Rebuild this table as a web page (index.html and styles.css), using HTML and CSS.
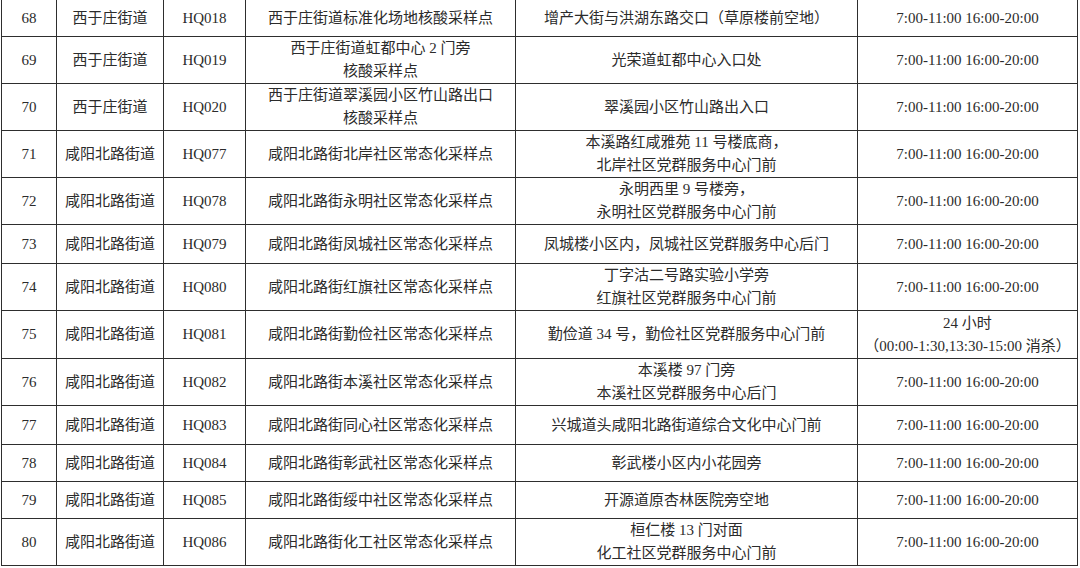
FILE: index.html
```html
<!DOCTYPE html>
<html lang="zh-CN">
<head>
<meta charset="utf-8">
<title>核酸采样点</title>
<link rel="stylesheet" href="styles.css">
</head>
<body>
<table class="sites">
  <colgroup>
    <col class="c-no"><col class="c-street"><col class="c-code"><col class="c-name"><col class="c-addr"><col class="c-time">
  </colgroup>
  <tbody>
    <tr class="h37"><td>68</td><td>西于庄街道</td><td>HQ018</td><td>西于庄街道标准化场地核酸采样点</td><td>增产大街与洪湖东路交口（草原楼前空地）</td><td>7:00-11:00 16:00-20:00</td></tr>
    <tr class="h47"><td>69</td><td>西于庄街道</td><td>HQ019</td><td>西于庄街道虹都中心 2 门旁<br>核酸采样点</td><td>光荣道虹都中心入口处</td><td>7:00-11:00 16:00-20:00</td></tr>
    <tr class="h47"><td>70</td><td>西于庄街道</td><td>HQ020</td><td>西于庄街道翠溪园小区竹山路出口<br>核酸采样点</td><td>翠溪园小区竹山路出入口</td><td>7:00-11:00 16:00-20:00</td></tr>
    <tr class="h47"><td>71</td><td>咸阳北路街道</td><td>HQ077</td><td>咸阳北路街北岸社区常态化采样点</td><td>本溪路红咸雅苑 11 号楼底商，<br>北岸社区党群服务中心门前</td><td>7:00-11:00 16:00-20:00</td></tr>
    <tr class="h47"><td>72</td><td>咸阳北路街道</td><td>HQ078</td><td>咸阳北路街永明社区常态化采样点</td><td>永明西里 9 号楼旁，<br>永明社区党群服务中心门前</td><td>7:00-11:00 16:00-20:00</td></tr>
    <tr class="h39"><td>73</td><td>咸阳北路街道</td><td>HQ079</td><td>咸阳北路街凤城社区常态化采样点</td><td>凤城楼小区内，凤城社区党群服务中心后门</td><td>7:00-11:00 16:00-20:00</td></tr>
    <tr class="h46"><td>74</td><td>咸阳北路街道</td><td>HQ080</td><td>咸阳北路街红旗社区常态化采样点</td><td>丁字沽二号路实验小学旁<br>红旗社区党群服务中心门前</td><td>7:00-11:00 16:00-20:00</td></tr>
    <tr class="h48"><td>75</td><td>咸阳北路街道</td><td>HQ081</td><td>咸阳北路街勤俭社区常态化采样点</td><td>勤俭道 34 号，勤俭社区党群服务中心门前</td><td>24 小时<br>（00:00-1:30,13:30-15:00 消杀）</td></tr>
    <tr class="h47"><td>76</td><td>咸阳北路街道</td><td>HQ082</td><td>咸阳北路街本溪社区常态化采样点</td><td>本溪楼 97 门旁<br>本溪社区党群服务中心后门</td><td>7:00-11:00 16:00-20:00</td></tr>
    <tr class="h39"><td>77</td><td>咸阳北路街道</td><td>HQ083</td><td>咸阳北路街同心社区常态化采样点</td><td>兴城道头咸阳北路街道综合文化中心门前</td><td>7:00-11:00 16:00-20:00</td></tr>
    <tr class="h37"><td>78</td><td>咸阳北路街道</td><td>HQ084</td><td>咸阳北路街彰武社区常态化采样点</td><td>彰武楼小区内小花园旁</td><td>7:00-11:00 16:00-20:00</td></tr>
    <tr class="h37"><td>79</td><td>咸阳北路街道</td><td>HQ085</td><td>咸阳北路街绥中社区常态化采样点</td><td>开源道原杏林医院旁空地</td><td>7:00-11:00 16:00-20:00</td></tr>
    <tr class="h46"><td>80</td><td>咸阳北路街道</td><td>HQ086</td><td>咸阳北路街化工社区常态化采样点</td><td>桓仁楼 13 门对面<br>化工社区党群服务中心门前</td><td>7:00-11:00 16:00-20:00</td></tr>
  </tbody>
</table>
</body>
</html>
```

FILE: styles.css
```css
html, body {
  margin: 0;
  padding: 0;
  background: #ffffff;
}

body {
  padding-left: 1px;
}

.sites {
  margin-top: -1px;
  width: 1076px;
  table-layout: fixed;
  border-collapse: collapse;
  font-family: "Liberation Serif", "Noto Sans CJK SC", serif;
  font-size: 15px;
  line-height: 23px;
  color: #2b2b2b;
}

.c-no { width: 55px; }
.c-street { width: 107px; }
.c-code { width: 82px; }
.c-name { width: 270px; }
.c-addr { width: 342px; }
.c-time { width: 220px; }

.sites td {
  border: 1px solid #2e2e2e;
  padding: 0 2px;
  text-align: center;
  vertical-align: middle;
  white-space: nowrap;
  overflow: hidden;
}

.h37 { height: 37px; }
.h39 { height: 39px; }
.h46 { height: 46px; }
.h47 { height: 47px; }
.h48 { height: 48px; }
```
